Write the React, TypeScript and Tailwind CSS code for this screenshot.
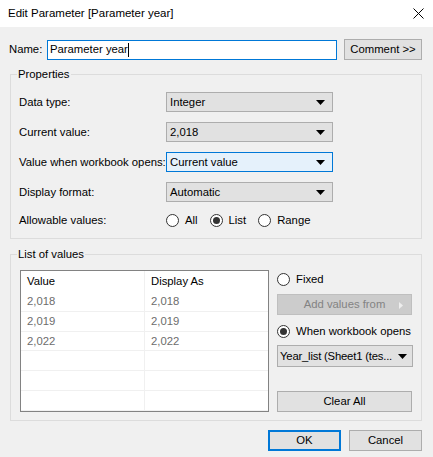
import React from 'react'

const font = { fontFamily: '"Segoe UI", "Liberation Sans", Arial, sans-serif' }

function Caret() {
  return (
    <svg width="9" height="5" viewBox="0 0 9 5" className="shrink-0">
      <path d="M0 0h9L4.5 5z" fill="#000" />
    </svg>
  )
}

function Select({ value, focused, className = '' }: { value: string; focused?: boolean; className?: string }) {
  return (
    <div
      className={`flex items-center justify-between pl-[3px] pr-[7px] border ${
        focused ? 'border-[#0078d7] bg-[#e5f1fb]' : 'border-[#adadad] bg-[#e1e1e1]'
      } ${className}`}
    >
      <span className="whitespace-nowrap">{value}</span>
      <Caret />
    </div>
  )
}

function Radio({ label, checked }: { label: string; checked?: boolean }) {
  return (
    <div className="flex items-center gap-[6px] whitespace-nowrap">
      <span className="w-[13px] h-[13px] rounded-full border border-[#333] bg-white flex items-center justify-center shrink-0">
        {checked && <span className="w-[7px] h-[7px] rounded-full bg-[#333]" />}
      </span>
      <span>{label}</span>
    </div>
  )
}

const rows = [
  ['2,018', '2,018'],
  ['2,019', '2,019'],
  ['2,022', '2,022'],
  ['', ''],
  ['', ''],
  ['', ''],
]

export default function App() {
  return (
    <div className="w-[433px] h-[457px] bg-[#f0f0f0] text-[11.3px] text-black overflow-hidden" style={font}>
      <div className="h-[27px] bg-white flex items-center justify-between pl-[8px] pr-[9px] text-[11.5px]">
        <span>Edit Parameter [Parameter year]</span>
        <svg width="11" height="11" viewBox="0 0 11 11">
          <path d="M0.5 0.5l10 10M10.5 0.5l-10 10" stroke="#000" strokeWidth="1" />
        </svg>
      </div>

      <div className="flex items-center pt-[12px] pl-[9px]">
        <span className="w-[38px]">Name:</span>
        <div className="w-[290px] h-[20px] border border-[#0078d7] bg-white flex items-center pl-[2px]">
          Parameter year<span className="w-px h-[14px] bg-black" />
        </div>
        <button className="ml-[7px] w-[78px] h-[21px] border border-[#adadad] bg-[#e1e1e1]">Comment &gt;&gt;</button>
      </div>

      <fieldset className="mt-[6px] ml-[10px] mr-[11px] border border-[#dcdcdc] pl-[8px] pr-[8px] pt-[10px] pb-[8px]">
        <legend className="ml-[-2px] px-px leading-[16px]">Properties</legend>
        <div className="flex flex-col gap-[10px] whitespace-nowrap">
          <div className="flex items-center h-[20px]">
            <span className="w-[147px]">Data type:</span>
            <Select value="Integer" className="w-[167px] h-[20px]" />
          </div>
          <div className="flex items-center h-[20px]">
            <span className="w-[147px]">Current value:</span>
            <Select value="2,018" className="w-[167px] h-[20px]" />
          </div>
          <div className="flex items-center h-[20px]">
            <span className="w-[147px]">Value when workbook opens:</span>
            <Select value="Current value" focused className="w-[167px] h-[20px]" />
          </div>
          <div className="flex items-center h-[20px]">
            <span className="w-[147px]">Display format:</span>
            <Select value="Automatic" className="w-[167px] h-[20px]" />
          </div>
        </div>
        <div className="flex items-center h-[20px] mt-[8px]">
          <span className="w-[147px]">Allowable values:</span>
          <div className="flex items-center gap-[12px]">
            <Radio label="All" />
            <Radio label="List" checked />
            <Radio label="Range" />
          </div>
        </div>
      </fieldset>

      <fieldset className="mt-[7px] ml-[10px] mr-[11px] border border-[#dcdcdc] pl-[9px] pt-[8px] pb-[8px]">
        <legend className="ml-[-3px] px-px leading-[16px]">List of values</legend>
        <div className="flex gap-[8px]">
          <div className="w-[249px] h-[142px] border border-[#828282] bg-white flex flex-col">
            <div className="flex h-[21px] items-center">
              <div className="w-[124px] pl-[6px] border-r border-[#f0f0f0] h-full flex items-center">Value</div>
              <div className="flex-1 pl-[6px] flex items-center h-full">Display As</div>
            </div>
            {rows.map((r, i) => (
              <div key={i} className="flex h-[20px] border-b border-[#f0f0f0] text-[#6d6d6d]">
                <div className="w-[124px] pl-[6px] border-r border-[#f0f0f0] flex items-center">{r[0]}</div>
                <div className="flex-1 pl-[6px] flex items-center">{r[1]}</div>
              </div>
            ))}
          </div>

          <div className="w-[136px] flex flex-col">
            <div className="h-[18px] flex items-center">
              <Radio label="Fixed" />
            </div>
            <button className="mt-[6px] w-[135px] h-[21px] border border-[#bfbfbf] bg-[#cccccc] text-[#838383] flex items-center justify-center relative">
              Add values from
              <svg width="4" height="7" viewBox="0 0 4 7" className="absolute right-[8px] top-[7px]">
                <path d="M0 0l4 3.5L0 7z" fill="#eeeeee" />
              </svg>
            </button>
            <div className="mt-[7px] h-[18px] flex items-center">
              <Radio label="When workbook opens" checked />
            </div>
            <Select value="Year_list (Sheet1 (tes..." className="mt-[5px] w-[136px] h-[22px] !pl-[2px] !pr-[5px] tracking-[-0.2px]" />
            <button className="mt-[24px] w-[135px] h-[21px] border border-[#adadad] bg-[#e1e1e1]">Clear All</button>
          </div>
        </div>
      </fieldset>

      <div className="flex justify-end gap-[8px] mt-[9px] pr-[11px]">
        <button className="w-[73px] h-[21px] border-2 border-[#0078d7] bg-[#e1e1e1]">OK</button>
        <button className="w-[73px] h-[21px] border border-[#adadad] bg-[#e1e1e1]">Cancel</button>
      </div>
    </div>
  )
}
